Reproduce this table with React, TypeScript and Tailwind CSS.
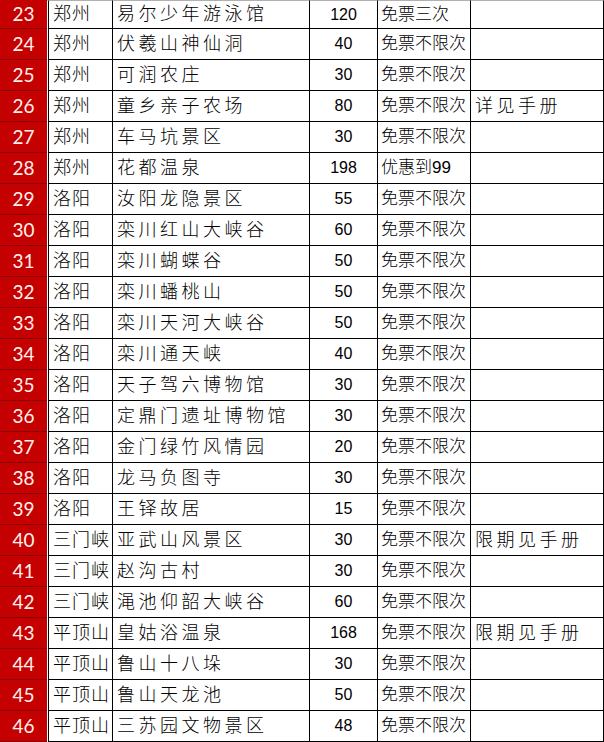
import React from "react";

type Row = [number, string, string, string, string, string];

const rows: Row[] = [
  [23, "郑州", "易尔少年游泳馆", "120", "免票三次", ""],
  [24, "郑州", "伏羲山神仙洞", "40", "免票不限次", ""],
  [25, "郑州", "可润农庄", "30", "免票不限次", ""],
  [26, "郑州", "童乡亲子农场", "80", "免票不限次", "详见手册"],
  [27, "郑州", "车马坑景区", "30", "免票不限次", ""],
  [28, "郑州", "花都温泉", "198", "优惠到99", ""],
  [29, "洛阳", "汝阳龙隐景区", "55", "免票不限次", ""],
  [30, "洛阳", "栾川红山大峡谷", "60", "免票不限次", ""],
  [31, "洛阳", "栾川蝴蝶谷", "50", "免票不限次", ""],
  [32, "洛阳", "栾川蟠桃山", "50", "免票不限次", ""],
  [33, "洛阳", "栾川天河大峡谷", "50", "免票不限次", ""],
  [34, "洛阳", "栾川通天峡", "40", "免票不限次", ""],
  [35, "洛阳", "天子驾六博物馆", "30", "免票不限次", ""],
  [36, "洛阳", "定鼎门遗址博物馆", "30", "免票不限次", ""],
  [37, "洛阳", "金门绿竹风情园", "20", "免票不限次", ""],
  [38, "洛阳", "龙马负图寺", "30", "免票不限次", ""],
  [39, "洛阳", "王铎故居", "15", "免票不限次", ""],
  [40, "三门峡", "亚武山风景区", "30", "免票不限次", "限期见手册"],
  [41, "三门峡", "赵沟古村", "30", "免票不限次", ""],
  [42, "三门峡", "渑池仰韶大峡谷", "60", "免票不限次", ""],
  [43, "平顶山", "皇姑浴温泉", "168", "免票不限次", "限期见手册"],
  [44, "平顶山", "鲁山十八垛", "30", "免票不限次", ""],
  [45, "平顶山", "鲁山天龙池", "50", "免票不限次", ""],
  [46, "平顶山", "三苏园文物景区", "48", "免票不限次", ""],
];

const cjk = "font-['Liberation_Sans','Noto_Sans_CJK_SC',sans-serif] font-light";

export default function App() {
  return (
    <div className="w-[604px] h-[742px] overflow-hidden bg-white text-black">
      {rows.map((r, i) => {
        const first = i === 0;
        const h = first ? "h-[29px]" : "h-[31px]";
        const top = first ? "border-t border-t-[#b0b0b0]" : "";
        return (
          <div key={r[0]} className={`flex ${h}`}>
            <div className="w-[47px] shrink-0 bg-[#c40000] border-b border-[#8a0000] flex items-center justify-center text-[19px] text-[#fff0ec] font-['Lato',sans-serif]">
              {r[0]}
            </div>
            <div className={`w-[1px] shrink-0 bg-white ${top}`} />
            <div
              className={`w-[64px] shrink-0 border-l border-b border-black ${top} flex items-center pl-[4px] text-[18px] tracking-[1px] ${cjk} whitespace-nowrap`}
            >
              {r[1]}
            </div>
            <div
              className={`w-[197px] shrink-0 border-l border-b border-black ${top} flex items-center pl-[4px] text-[18px] tracking-[3.5px] ${cjk} whitespace-nowrap`}
            >
              {r[2]}
            </div>
            <div className={`w-[68px] shrink-0 border-l border-b border-black ${top} flex items-center justify-center text-[16px] font-['Liberation_Sans',sans-serif]`}>
              {r[3]}
            </div>
            <div
              className={`w-[93px] shrink-0 border-l border-b border-black ${top} flex items-center pl-[3px] text-[17px] ${cjk} whitespace-nowrap`}
            >
              {r[4]}
            </div>
            <div
              className={`w-[134px] shrink-0 border-l border-r border-b border-black ${top} flex items-center pl-[4px] text-[18px] tracking-[3.5px] ${cjk} whitespace-nowrap`}
            >
              {r[5]}
            </div>
          </div>
        );
      })}
    </div>
  );
}
